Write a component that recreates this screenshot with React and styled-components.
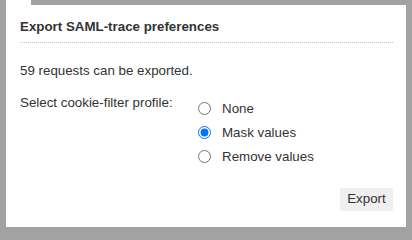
import React from "react";
import styled, { createGlobalStyle } from "styled-components";

const Global = createGlobalStyle`
  html, body { margin: 0; padding: 0; }
  body {
    width: 412px;
    height: 234px;
    overflow: hidden;
    background: #a2a2a2;
    font-family: "Liberation Sans", Arial, sans-serif;
  }
`;

const Backdrop = styled.div`
  width: 412px;
  height: 234px;
  box-sizing: border-box;
  padding: 5px 6px 7px 6px;
  display: flex;
`;

const Modal = styled.div`
  position: relative;
  flex: 1;
  background: #fff;
  box-sizing: border-box;
  padding: 14px 13px 16px 14px;
  display: flex;
  flex-direction: column;
  color: #333;
  &::before {
    content: "";
    position: absolute;
    top: -5px;
    left: 0;
    width: 25px;
    height: 5px;
    background: #fff;
  }
`;

const Header = styled.h1`
  margin: 0;
  font-size: 13.33px;
  line-height: 16px;
  font-weight: bold;
  color: #333;
  padding-bottom: 7px;
  border-bottom: 1px dotted #c4c4c4;
`;

const Text = styled.p`
  margin: 20px 0 0 0;
  font-size: 13.33px;
  line-height: 15px;
`;

const Form = styled.div`
  margin-top: 17px;
  display: grid;
  grid-template-columns: 178px auto;
  align-items: start;
`;

const FieldLabel = styled.div`
  font-size: 13.33px;
  line-height: 15px;
`;

const Options = styled.div`
  display: flex;
  flex-direction: column;
  gap: 9px;
  padding-top: 6px;
`;

const Option = styled.label`
  display: flex;
  align-items: center;
  font-size: 13.33px;
  line-height: 15px;
  color: #333;
`;

const Radio = styled.input`
  margin: 0 11px 0 0;
  width: 13px;
  height: 13px;
`;

const Footer = styled.div`
  margin-top: auto;
  display: flex;
  justify-content: flex-end;
`;

const Button = styled.button`
  font-family: "Liberation Sans", Arial, sans-serif;
  font-size: 13.33px;
  line-height: 16px;
  color: #333;
  background: #efefef;
  border: none;
  border-radius: 3px;
  padding: 3px 6px 4px 6px;
  width: 53px;
  height: 23px;
`;

export default function App() {
  return (
    <>
      <Global />
      <Backdrop>
        <Modal>
          <Header>Export SAML-trace preferences</Header>
          <Text>59 requests can be exported.</Text>
          <Form>
            <FieldLabel>Select cookie-filter profile:</FieldLabel>
            <Options>
              <Option>
                <Radio type="radio" name="filter" value="none" />
                None
              </Option>
              <Option>
                <Radio type="radio" name="filter" value="mask" defaultChecked />
                Mask values
              </Option>
              <Option>
                <Radio type="radio" name="filter" value="remove" />
                Remove values
              </Option>
            </Options>
          </Form>
          <Footer>
            <Button>Export</Button>
          </Footer>
        </Modal>
      </Backdrop>
    </>
  );
}
